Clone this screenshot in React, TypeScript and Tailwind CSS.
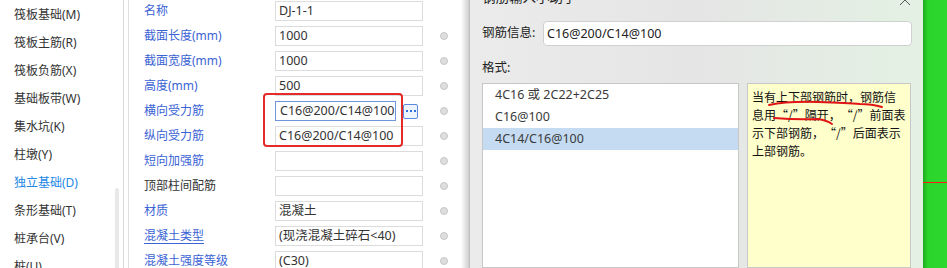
import React from "react";

const sans = "font-['Noto_Sans','Noto_Sans_CJK_SC',sans-serif]";
const cjk = "font-['Noto_Sans_CJK_SC','Noto_Sans',sans-serif]";

const navItems = [
  "筏板基础(M)",
  "筏板主筋(R)",
  "筏板负筋(X)",
  "基础板带(W)",
  "集水坑(K)",
  "柱墩(Y)",
  "独立基础(D)",
  "条形基础(T)",
  "桩承台(V)",
  "桩(U)",
];

type Prop = { label: string; value: string; blue: boolean; dot: boolean; link?: boolean; active?: boolean };

const props: Prop[] = [
  { label: "名称", value: "DJ-1-1", blue: true, dot: false },
  { label: "截面长度(mm)", value: "1000", blue: true, dot: true },
  { label: "截面宽度(mm)", value: "1000", blue: true, dot: true },
  { label: "高度(mm)", value: "500", blue: true, dot: true },
  { label: "横向受力筋", value: "C16@200/C14@100", blue: true, dot: true, active: true },
  { label: "纵向受力筋", value: "C16@200/C14@100", blue: true, dot: true },
  { label: "短向加强筋", value: "", blue: true, dot: true },
  { label: "顶部柱间配筋", value: "", blue: false, dot: true },
  { label: "材质", value: "混凝土", blue: true, dot: true },
  { label: "混凝土类型", value: "(现浇混凝土碎石<40)", blue: true, dot: true, link: true },
  { label: "混凝土强度等级", value: "(C30)", blue: true, dot: true, link: true },
];

const formats = ["4C16 或 2C22+2C25", "C16@100", "4C14/C16@100"];

function Dot() {
  return <div className="mt-[6px] ml-[17px] w-[8px] h-[8px] rounded-full bg-[#dedede] border border-[#c6c6c6]" />;
}

// full-width “/” as drawn by the dialog font
function Slash() {
  return (
    <>
      <span className="inline-block w-[12px] text-right">“</span>/<span className="inline-block w-[12px] text-left">”</span>
    </>
  );
}

function PropRow({ p }: { p: Prop }) {
  return (
    <div className="h-[25px] flex items-start pt-[1px]">
      <div
        className={`w-[131px] leading-[20px] text-[12px] ${p.blue ? "text-[#3a63d4]" : "text-[#333]"} ${
          p.link ? "underline underline-offset-[3px] decoration-[#3a63d4]" : ""
        }`}
      >
        {p.label}
      </div>
      {p.active ? (
        <div className="w-[148px] h-[20px] flex items-center">
          <div className="w-[121px] h-[20px] border border-[#6f95dc] bg-white pl-[4px] leading-[18px] text-[12.5px] text-[#333] whitespace-nowrap overflow-hidden">
            {p.value}
          </div>
          <div className="ml-[7px] w-[15px] h-[15px] rounded-[2px] border border-[#5b8ae0] bg-[#eef4fd] flex items-center justify-center gap-[2px]">
            <span className="w-[2px] h-[2px] bg-[#2f6fdc]" />
            <span className="w-[2px] h-[2px] bg-[#2f6fdc]" />
            <span className="w-[2px] h-[2px] bg-[#2f6fdc]" />
          </div>
        </div>
      ) : (
        <div className="w-[148px] h-[20px] border border-[#dcdcdc] bg-white pl-[3px] leading-[18px] text-[12.5px] text-[#333] whitespace-nowrap overflow-hidden">
          {p.value}
        </div>
      )}
      {p.dot && <Dot />}
    </div>
  );
}

export default function App() {
  return (
    <div className={`w-[947px] h-[268px] overflow-hidden flex bg-white ${sans}`}>
      {/* left nav */}
      <div className="w-[115px] pt-[1px]">
        {navItems.map((t) => (
          <div
            key={t}
            className={`h-[28px] leading-[28px] pl-[14px] text-[12px] whitespace-nowrap ${
              t === "独立基础(D)" ? "text-[#1e88e5]" : "text-[#333]"
            }`}
          >
            {t}
          </div>
        ))}
      </div>
      <div className="w-[5px] pt-[188px]">
        <div className="w-[4px] h-full bg-[#e8e8e8] rounded-t-[2px]" />
      </div>
      <div className="w-[3px]" />
      <div className="w-[1px] bg-[#dadada]" />
      <div className="w-[4px]" />
      <div className="w-[1px] bg-[#dedede]" />

      {/* property panel */}
      <div className="w-[332px] relative pl-[15px]">
        {props.map((p) => (
          <PropRow key={p.label} p={p} />
        ))}
        <div className="absolute left-[134px] top-[93px] w-[140px] h-[54px] border-[2.5px] border-[#e52a2a] rounded-[4px]" />
      </div>

      {/* dialog shadow */}
      <div className="w-[8px] bg-linear-to-r from-white to-[#cfcfcf]" />

      {/* dialog */}
      <div className="w-[454px] flex flex-col border-l border-[#bdbdbd] bg-linear-to-r from-[#ebebeb] via-[#e5e5e5] to-[#e3f1e3] relative pl-[12px]">
        <div className="h-[21px] relative">
          <div className="absolute left-0 -top-[12px] text-[13.5px] text-[#222] leading-[18px] whitespace-nowrap">钢筋输入小助手</div>
          <svg className="absolute right-[12px] -top-[6px]" width="12" height="12" viewBox="0 0 12 12">
            <path d="M1 1L11 11M11 1L1 11" stroke="#555" strokeWidth="1" fill="none" />
          </svg>
        </div>
        <div className="h-[25px] flex items-center">
          <div className="w-[61px] text-[12.5px] text-[#222]">钢筋信息:</div>
          <div className="w-[369px] h-[25px] rounded-[4px] border border-[#d0d0d0] bg-white pl-[3px] leading-[23px] text-[12.5px] text-[#222]">
            C16@200/C14@100
          </div>
        </div>
        <div className="mt-[12px] h-[20px] leading-[20px] text-[12.5px] text-[#222]">格式:</div>
        <div className="mt-[5px] flex-1 flex gap-[8px]">
          <div className="w-[257px] border border-[#c7c7c7] bg-white">
            {formats.map((f, i) => (
              <div
                key={f}
                className={`h-[22px] leading-[22px] pl-[12px] text-[12.5px] text-[#3a3a3a] ${
                  i === 2 ? "bg-[#c4dbf2]" : ""
                }`}
              >
                {f}
              </div>
            ))}
          </div>
          <div className={`w-[164px] relative border border-[#c8c8c8] bg-[#ffffcc] pl-[4px] pt-[4px] text-[12px] leading-[18px] text-[#111] ${cjk}`}>
            <div className="whitespace-nowrap">当有上下部钢筋时，钢筋信</div>
            <div className="whitespace-nowrap">
              息用<Slash />隔开，<Slash />前面表
            </div>
            <div className="whitespace-nowrap">
              示下部钢筋，<Slash />后面表示
            </div>
            <div className="whitespace-nowrap">上部钢筋。</div>
            <svg className="absolute left-0 top-0 pointer-events-none" width="164" height="60" viewBox="0 0 164 60">
              <path d="M21 21 Q 40 17 70 18 T 112 20 Q 124 20 134 23" stroke="#e01414" strokeWidth="2" fill="none" strokeLinecap="round" />
              <path d="M26 34 Q 50 36 70 35 Q 78 36 84 40" stroke="#e01414" strokeWidth="2" fill="none" strokeLinecap="round" />
            </svg>
          </div>
        </div>
      </div>

      {/* green strip */}
      <div className="w-[24px] flex flex-col bg-linear-to-r from-[#1faa1f] via-[#2ad42a] via-20% to-[#2ed82e]">
        <div className="h-[182px]" />
        <div className="h-[1px] bg-[#ff1a1a]" />
      </div>
    </div>
  );
}
